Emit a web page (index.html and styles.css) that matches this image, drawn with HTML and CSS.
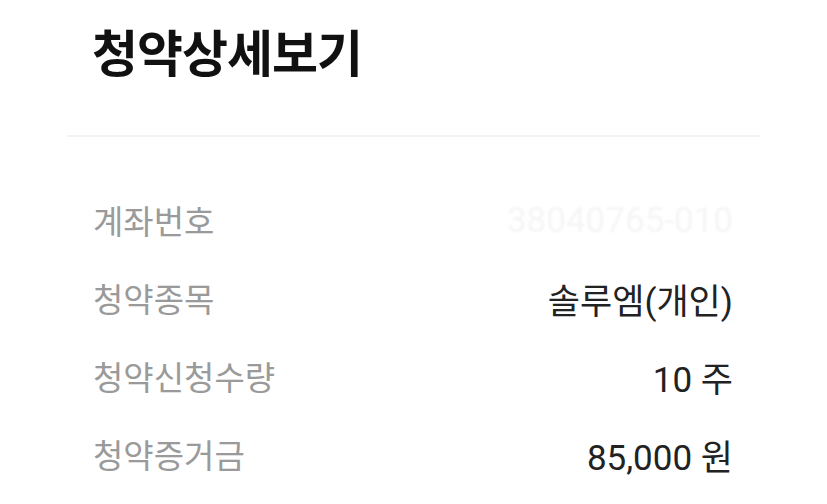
FILE: index.html
```html
<!DOCTYPE html>
<html lang="ko">
<head>
  <meta charset="UTF-8">
  <title>청약상세보기</title>
  <link rel="stylesheet" href="styles.css">
</head>
<body>
  <header class="page-header">
    <h1>청약상세보기</h1>
  </header>
  <main class="detail">
    <dl class="detail-list">
      <div class="detail-row">
        <dt>계좌번호</dt>
        <dd class="masked">38040765-010</dd>
      </div>
      <div class="detail-row">
        <dt>청약종목</dt>
        <dd>솔루엠(개인)</dd>
      </div>
      <div class="detail-row">
        <dt>청약신청수량</dt>
        <dd>10 주</dd>
      </div>
      <div class="detail-row">
        <dt>청약증거금</dt>
        <dd>85,000 원</dd>
      </div>
    </dl>
  </main>
</body>
</html>
```

FILE: styles.css
```css
:root {
  --text: #222;
  --label: #9a9a9a;
  --line: #f3f3f3;
  --font: Roboto, 'Noto Sans CJK KR', sans-serif;
}

body {
  margin: 0;
  background: #fff;
  color: var(--text);
  font-family: var(--font);
  width: 827px;
  height: 504px;
  overflow: hidden;
}

.page-header {
  margin: 0 67px;
  padding: 22px 26px 47px 25px;
  border-bottom: 2px solid var(--line);
}

.page-header h1 {
  margin: 0;
  color: #111;
  font-size: 50px;
  font-weight: 700;
  letter-spacing: -1px;
  line-height: 66px;
}

.detail {
  padding: 44px 94px 0 93px;
}

.detail-list {
  margin: 0;
  display: flex;
  flex-direction: column;
}

.detail-row {
  display: flex;
  justify-content: space-between;
  align-items: center;
  height: 78px;
}

.detail-row dt {
  color: var(--label);
  font-size: 33px;
}

.detail-row dd {
  margin: 0;
  color: var(--text);
  font-size: 35px;
}

.detail-row .masked {
  color: #f5f5f5;
  filter: blur(1px);
}
```
